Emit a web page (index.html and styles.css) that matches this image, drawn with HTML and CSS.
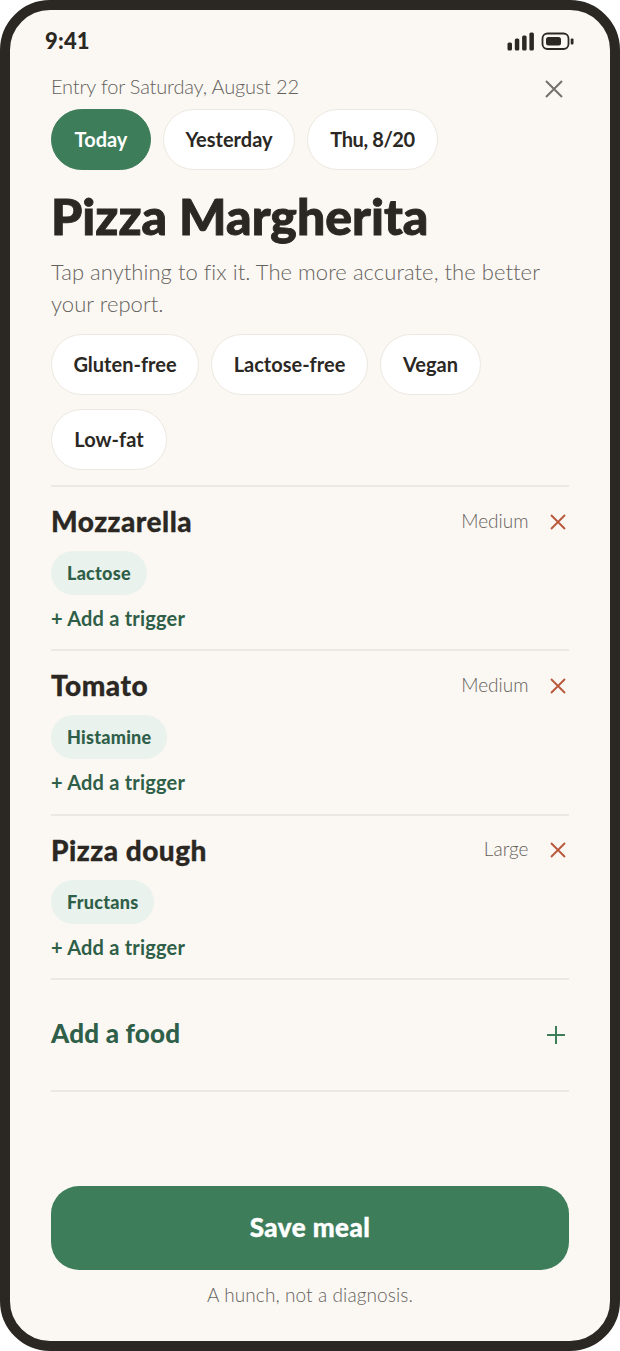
FILE: index.html
```html
<!DOCTYPE html>
<html>

<head>
	<meta charset="utf-8" />
	<title>Entry</title>
	<link rel="stylesheet" href="styles.css">
</head>

<body>
	<div class="phone">
		<div class="statusbar">
			<span class="time">9:41</span>
			<svg class="status-icons" width="68" height="20" viewBox="0 0 68 20">
				<g fill="#2b2824">
					<rect x="0.5" y="10.5" width="4.5" height="8" rx="1.5" />
					<rect x="7.8" y="6.5" width="4.5" height="12" rx="1.5" />
					<rect x="15.1" y="3.5" width="4.5" height="15" rx="1.5" />
					<rect x="22.4" y="0.5" width="4.5" height="18" rx="1.5" />
					<rect x="39" y="5" width="15" height="8.5" rx="2.5" />
					<rect x="63.7" y="6.5" width="2.8" height="6" rx="1" />
				</g>
				<rect x="35.5" y="1.5" width="26" height="15.5" rx="5" fill="none" stroke="#2b2824" stroke-width="1.8" />
			</svg>
		</div>

		<div class="entry-head">
			<span class="entry-date">Entry for Saturday, August 22</span>
			<svg class="close" width="20" height="20" viewBox="0 0 20 20">
				<path d="M2 2 L18 18 M18 2 L2 18" stroke="#74716c" stroke-width="2" fill="none" />
			</svg>
		</div>

		<div class="pills day-pills">
			<span class="pill pill-active pill-today">Today</span>
			<span class="pill pill-yesterday">Yesterday</span>
			<span class="pill pill-thu">Thu, 8/20</span>
		</div>

		<h1 class="title">Pizza Margherita</h1>
		<p class="hint">Tap anything to fix it. The more accurate, the better your report.</p>

		<div class="pills diet-pills">
			<span class="pill pill-gluten">Gluten-free</span>
			<span class="pill pill-lactose">Lactose-free</span>
			<span class="pill pill-vegan">Vegan</span>
			<span class="pill pill-lowfat">Low-fat</span>
		</div>

		<div class="food">
			<div class="food-top">
				<span class="food-name">Mozzarella</span>
				<span class="food-size">Medium</span>
				<svg class="remove" width="16" height="16" viewBox="0 0 16 16">
					<path d="M1 1 L15 15 M15 1 L1 15" stroke="#b9583a" stroke-width="1.9" fill="none" />
				</svg>
			</div>
			<span class="tag">Lactose</span>
			<div class="add-trigger">+ Add a trigger</div>
		</div>

		<div class="food">
			<div class="food-top">
				<span class="food-name">Tomato</span>
				<span class="food-size">Medium</span>
				<svg class="remove" width="16" height="16" viewBox="0 0 16 16">
					<path d="M1 1 L15 15 M15 1 L1 15" stroke="#b9583a" stroke-width="1.9" fill="none" />
				</svg>
			</div>
			<span class="tag">Histamine</span>
			<div class="add-trigger">+ Add a trigger</div>
		</div>

		<div class="food">
			<div class="food-top">
				<span class="food-name">Pizza dough</span>
				<span class="food-size">Large</span>
				<svg class="remove" width="16" height="16" viewBox="0 0 16 16">
					<path d="M1 1 L15 15 M15 1 L1 15" stroke="#b9583a" stroke-width="1.9" fill="none" />
				</svg>
			</div>
			<span class="tag">Fructans</span>
			<div class="add-trigger">+ Add a trigger</div>
		</div>

		<div class="add-food">
			<span class="add-food-text">Add a food</span>
			<svg class="add-food-icon" width="18" height="18" viewBox="0 0 18 18">
				<path d="M9 0 V18 M0 9 H18" stroke="#3d7d5a" stroke-width="2" fill="none" />
			</svg>
		</div>

		<div class="bottom">
			<div class="save">Save meal</div>
			<div class="footnote">A hunch, not a diagnosis.</div>
		</div>
	</div>
</body>

</html>
```

FILE: styles.css
```css
* {
	box-sizing: border-box;
}

html,
body {
	margin: 0;
	padding: 0;
	background: #fff;
}

body {
	font-family: "Lato", "Open Sans", sans-serif;
	color: #2b2824;
}

.phone {
	display: flex;
	flex-direction: column;
	width: 620px;
	height: 1351px;
	padding: 0 41px 0 41px;
	background: #fbf8f3;
	border: 10px solid #2b2824;
	border-radius: 50px;
}

.statusbar {
	display: flex;
	justify-content: space-between;
	align-items: center;
	height: 40px;
	margin: 11px -6px 0 -6px;
}

.time {
	margin-top: -2px;
	font-size: 22px;
	font-weight: 900;
	letter-spacing: 0.2px;
}

.status-icons {
	margin-top: 2px;
}

.entry-head {
	display: flex;
	justify-content: space-between;
	align-items: center;
	height: 28px;
	margin-top: 12px;
}

.entry-date {
	margin-top: -2px;
	font-size: 20px;
	font-weight: 300;
	color: #65625d;
	letter-spacing: -0.18px;
}

.close {
	margin-right: 5px;
	margin-top: 3px;
}

.pills {
	display: flex;
	flex-wrap: wrap;
	gap: 14px 12px;
}

.day-pills {
	margin-top: 8px;
}

.pill {
	display: flex;
	justify-content: center;
	align-items: center;
	height: 61px;
	padding-bottom: 2px;
	font-size: 20px;
	font-weight: 700;
	background: #fff;
	border: 1.5px solid #ece8e1;
	border-radius: 31px;
	color: #2b2824;
}

.pill-active {
	background: #3d7d5a;
	border-color: #3d7d5a;
	color: #fff;
}

.pill-today { width: 100px; }
.pill-yesterday { width: 132px; }
.pill-thu { width: 131px; letter-spacing: -0.4px; }
.pill-gluten { width: 148px; }
.pill-lactose { width: 157px; }
.pill-vegan { width: 101px; }
.pill-lowfat { width: 116px; }

.title {
	margin: 15px 0 0 0;
	height: 62px;
	font-size: 50px;
	line-height: 62px;
	font-weight: 900;
	letter-spacing: 0;
	-webkit-text-stroke: 0.9px #2b2824;
}

.hint {
	margin: 9px 0 0 0;
	font-size: 22px;
	line-height: 32px;
	font-weight: 300;
	letter-spacing: 0.05px;
	color: #65625d;
}

.diet-pills {
	margin-top: 14px;
}

.food {
	display: flex;
	flex-direction: column;
	align-items: flex-start;
	height: 164.3px;
	border-top: 2px solid #ece8e1;
	padding-top: 16px;
}

.diet-pills + .food {
	margin-top: 15px;
}

.food-top {
	display: flex;
	align-items: center;
	width: 100%;
	height: 36px;
}

.food-name {
	flex: 1;
	font-size: 28px;
	font-weight: 900;
	letter-spacing: 0.5px;
	-webkit-text-stroke: 0.3px #2b2824;
}

.food-size {
	margin-top: -2px;
	font-size: 19px;
	font-weight: 300;
	color: #65625d;
}

.remove {
	margin-top: 1px;
	margin-left: 21px;
	margin-right: 3.5px;
}

.tag {
	display: flex;
	align-items: center;
	height: 44px;
	margin-top: 12px;
	padding: 0 16px;
	font-size: 18px;
	font-weight: 900;
	letter-spacing: 0.25px;
	background: #eaf2ed;
	border-radius: 22px;
	color: #2f5f48;
}

.add-trigger {
	margin-top: 10px;
	font-size: 20px;
	line-height: 26px;
	font-weight: 700;
	letter-spacing: 0.2px;
	color: #2f5f48;
}

.add-food {
	display: flex;
	justify-content: space-between;
	align-items: center;
	height: 114px;
	border-top: 2px solid #ece8e1;
	border-bottom: 2px solid #ece8e1;
}

.add-food-text {
	margin-top: -3px;
	font-size: 26px;
	font-weight: 900;
	letter-spacing: 0.2px;
	color: #2f5f48;
}

.add-food-icon {
	margin-right: 4px;
}

.bottom {
	margin-top: auto;
	padding-bottom: 33px;
}

.save {
	display: flex;
	justify-content: center;
	align-items: center;
	height: 84px;
	padding-bottom: 2px;
	font-size: 26px;
	font-weight: 900;
	letter-spacing: 0.45px;
	background: #3d7d5a;
	border-radius: 28px;
	color: #fff;
	-webkit-text-stroke: 0.4px #fff;
}

.footnote {
	margin-top: 12px;
	font-size: 19px;
	line-height: 26px;
	font-weight: 300;
	letter-spacing: 0.1px;
	text-align: center;
	color: #65625d;
}
```
